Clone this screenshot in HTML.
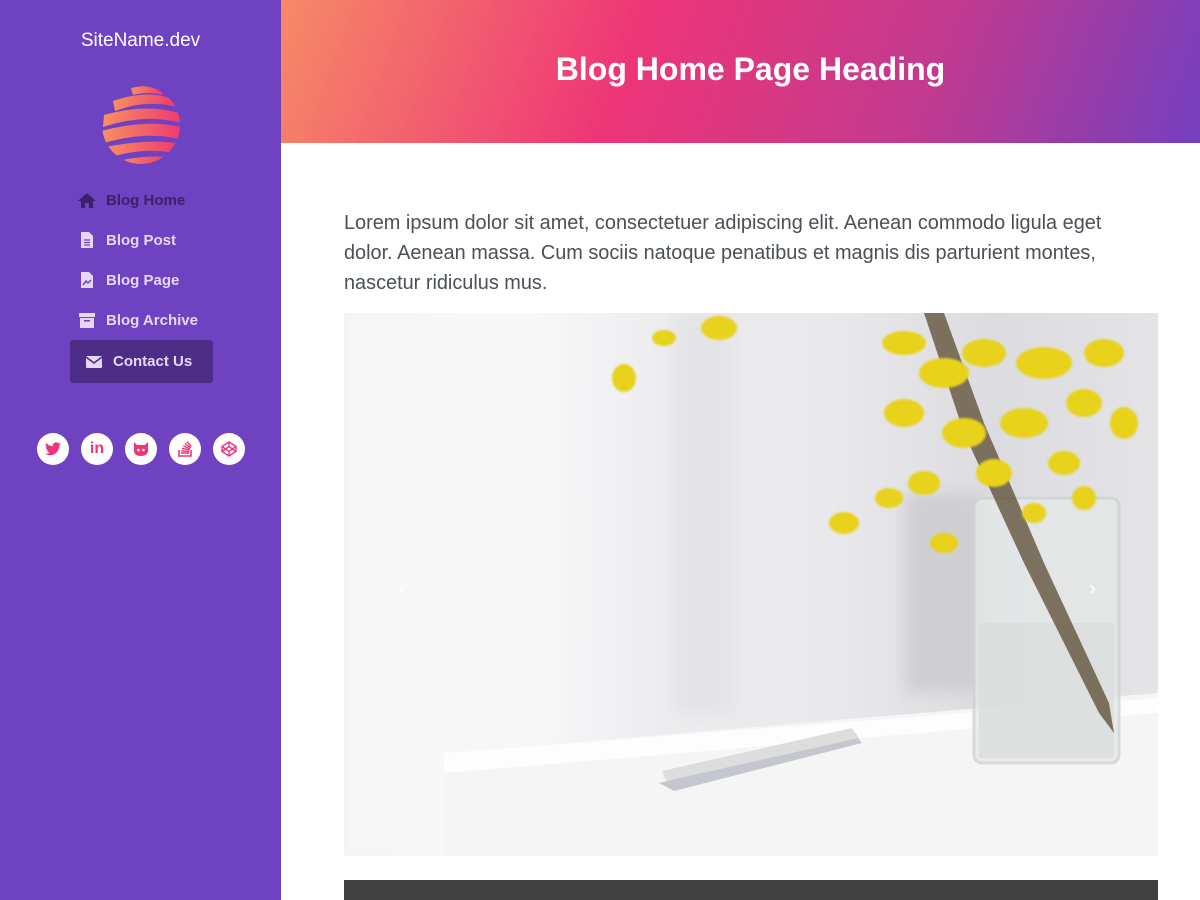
<!DOCTYPE html>
<html><head><meta charset="utf-8"><style>
*{margin:0;padding:0;box-sizing:border-box}
body{width:1200px;height:900px;overflow:hidden;background:#fff;font-family:"Liberation Sans",sans-serif;position:relative}
.side{position:absolute;left:0;top:0;width:281px;height:900px;background:#6f42c1}
.site{position:absolute;top:30px;width:281px;text-align:center;color:#fff;font-size:19px}
.nav{position:absolute;left:70px;width:143px;font-weight:bold;font-size:15px;color:#e6d8f5}
.nav div{height:40px;display:flex;align-items:center;padding-left:8px}
.nav .ic{width:28px;display:flex;justify-content:center;padding-right:10px}
.contact{background:#4e2d89;border-radius:3px;height:43px!important;padding-left:15px!important}
.soc{position:absolute;top:433px;width:32px;height:32px;border-radius:50%;background:#fff;display:flex;align-items:center;justify-content:center}
.hdr{position:absolute;left:281px;top:0;width:919px;height:143px;padding-left:20px;background:linear-gradient(110deg,#f68a66 0%,#ee3577 38%,#c13a8f 70%,#743fbf 100%)}
.hdr h1{text-align:center;color:#fff;font-size:32px;margin-top:51px}
p.t{position:absolute;left:344px;top:208px;width:800px;font-size:19.9px;line-height:30px;color:#495057}
.img{position:absolute;left:344px;top:313px;width:814px;height:543px;overflow:hidden;background:linear-gradient(90deg,#f2f2f4 0%,#fafafb 20%,#ececef 40%,#e9e9ec 60%,#dcdce0 80%,#e4e4e7 100%)}
.bar{position:absolute;left:344px;top:880px;width:814px;height:20px;background:#414141}
</style></head><body>
<div class="side">
<div class="site">SiteName.dev</div>
<svg style="position:absolute;left:101px;top:85px" width="80" height="80" viewBox="0 0 80 80">
<defs><linearGradient id="g" x1="0" x2="1"><stop offset="0" stop-color="#f89060"/><stop offset="1" stop-color="#ee3a70"/></linearGradient><clipPath id="c"><circle cx="40" cy="40" r="39"/></clipPath></defs>
<g clip-path="url(#c)" fill="url(#g)">
<path d="M30 3 Q50 -2 60 6 L62 10 Q45 6 32 10Z"/>
<path d="M12 16 Q45 4 72 14 L76 22 Q45 14 14 26Z"/>
<path d="M3 30 Q45 18 78 28 L80 38 Q45 28 2 42Z"/>
<path d="M0 46 Q45 34 80 42 L78 54 Q45 46 3 58Z"/>
<path d="M4 62 Q45 54 76 58 L72 68 Q45 62 10 72Z"/>
<path d="M16 76 Q45 70 66 72 L56 82 Q40 82 24 82Z"/>
</g></svg>
<div class="nav" style="top:180px">
<div style="color:#3b2266"><span class="ic"><svg width="18" height="15" viewBox="0 0 18 15"><path d="M9 0 L18 8 H15 V15 H11 V10 H7 V15 H3 V8 H0Z" fill="#3b2266"/></svg></span>Blog Home</div>
<div><span class="ic"><svg width="12" height="16" viewBox="0 0 12 16"><path d="M0 0H8L12 4V16H0Z" fill="#e6d8f5"/><path d="M3 8H9M3 10.5H9M3 13H9" stroke="#6f42c1" stroke-width="1.3"/></svg></span>Blog Post</div>
<div><span class="ic"><svg width="12" height="16" viewBox="0 0 12 16"><path d="M0 0H8L12 4V16H0Z" fill="#e6d8f5"/><path d="M2 13L5 9L7 11L10 8" stroke="#6f42c1" stroke-width="1.5" fill="none"/></svg></span>Blog Page</div>
<div><span class="ic"><svg width="16" height="15" viewBox="0 0 16 15"><rect width="16" height="4" fill="#e6d8f5"/><rect x="1" y="5" width="14" height="10" fill="#e6d8f5"/><rect x="5" y="7" width="6" height="1.6" fill="#6f42c1"/></svg></span>Blog Archive</div>
<div class="contact"><span class="ic" style="width:18px;padding-right:0;margin-right:10px"><svg width="16" height="12" viewBox="0 0 16 12"><rect width="16" height="12" rx="1" fill="#e6d8f5"/><path d="M0 1L8 7L16 1" stroke="#4e2d89" stroke-width="1.5" fill="none"/></svg></span>Contact Us</div>
</div>
<div class="soc" style="left:37px"><svg width="16" height="14" viewBox="0 0 24 20"><path d="M24 2.4a10 10 0 0 1-2.8.8A5 5 0 0 0 23.3.4a10 10 0 0 1-3.1 1.2A4.9 4.9 0 0 0 11.8 6 14 14 0 0 1 1.7.9a4.9 4.9 0 0 0 1.5 6.6A4.9 4.9 0 0 1 1 6.9a4.9 4.9 0 0 0 3.9 4.8 4.9 4.9 0 0 1-2.2.1 4.9 4.9 0 0 0 4.6 3.4A10 10 0 0 1 0 17.2 14 14 0 0 0 7.5 19.4c9 0 14-7.5 14-14v-.6A10 10 0 0 0 24 2.4z" fill="#ee3577"/></svg></div>
<div class="soc" style="left:81px;color:#ee3577;font-weight:bold;font-size:16px">in</div>
<div class="soc" style="left:125px"><svg width="16" height="14" viewBox="0 0 16 14"><path d="M1 0L4 3H12L15 0V6Q16 14 8 14Q0 14 1 6Z" fill="#ee3577"/><circle cx="5.5" cy="8" r="1.3" fill="#fff"/><circle cx="10.5" cy="8" r="1.3" fill="#fff"/></svg></div>
<div class="soc" style="left:169px"><svg width="14" height="16" viewBox="0 0 14 16"><path d="M1 9V15H13V9" stroke="#ee3577" stroke-width="1.6" fill="none"/><path d="M3 12H11M3.3 9.8L11 10.6M4 7.3L11.3 9M5.3 4.8L12 8M7 2.6L12.6 6.8M9 .6L13.3 5.6" stroke="#ee3577" stroke-width="1.4"/></svg></div>
<div class="soc" style="left:213px"><svg width="16" height="16" viewBox="0 0 16 16" fill="none" stroke="#ee3577" stroke-width="1.4"><path d="M8 1L15 5.5V10.5L8 15L1 10.5V5.5Z"/><path d="M8 1V5.5M8 15V10.5M1 5.5L8 10.5L15 5.5M1 10.5L8 5.5L15 10.5"/></svg></div>
</div>
<div class="hdr"><h1>Blog Home Page Heading</h1></div>
<p class="t">Lorem ipsum dolor sit amet, consectetuer adipiscing elit. Aenean commodo ligula eget dolor. Aenean massa. Cum sociis natoque penatibus et magnis dis parturient montes, nascetur ridiculus mus.</p>
<div class="img">
<svg width="814" height="543" viewBox="0 0 814 543" style="position:absolute;left:0;top:0">
<defs><filter id="b"><feGaussianBlur stdDeviation="8"/></filter><filter id="b2"><feGaussianBlur stdDeviation="1"/></filter></defs>
<rect x="0" y="0" width="200" height="543" fill="#f7f7f8" filter="url(#b)"/>
<rect x="330" y="0" width="60" height="400" fill="#e4e4e7" filter="url(#b)"/>
<rect x="560" y="180" width="80" height="200" fill="#cfcfd3" filter="url(#b)"/>
<path d="M100 440 L814 380 L814 543 L100 543Z" fill="#f5f5f6"/>
<path d="M100 440 L814 385 L814 400 L100 460Z" fill="#fdfdfd"/>
<rect x="630" y="185" width="145" height="265" rx="8" fill="#e4e8e6" stroke="#cfd3d1" stroke-width="3" opacity=".8"/>
<rect x="635" y="310" width="135" height="135" fill="#d8dcda" opacity=".7"/>
<path d="M580 0 L620 120 L680 250 L755 400 L770 420 L765 390 L700 250 L640 110 L600 0Z" fill="#5a4a30" opacity=".75"/>
<path d="M315 470 L510 420 L518 430 L330 478Z" fill="#c4c7cf"/>
<path d="M318 458 L508 415 L515 425 L322 468Z" fill="#ddd"/>
<g fill="#e8d21a" filter="url(#b2)">
<ellipse cx="560" cy="30" rx="22" ry="12"/><ellipse cx="600" cy="60" rx="25" ry="15"/><ellipse cx="640" cy="40" rx="22" ry="14"/>
<ellipse cx="700" cy="50" rx="28" ry="16"/><ellipse cx="760" cy="40" rx="20" ry="14"/><ellipse cx="560" cy="100" rx="20" ry="14"/>
<ellipse cx="620" cy="120" rx="22" ry="15"/><ellipse cx="680" cy="110" rx="24" ry="15"/><ellipse cx="740" cy="90" rx="18" ry="14"/>
<ellipse cx="580" cy="170" rx="16" ry="12"/><ellipse cx="650" cy="160" rx="18" ry="14"/><ellipse cx="720" cy="150" rx="16" ry="12"/>
<ellipse cx="500" cy="210" rx="15" ry="11"/><ellipse cx="545" cy="185" rx="14" ry="10"/><ellipse cx="600" cy="230" rx="14" ry="10"/>
<ellipse cx="375" cy="15" rx="18" ry="12"/><ellipse cx="280" cy="65" rx="12" ry="14"/><ellipse cx="320" cy="25" rx="12" ry="8"/>
<ellipse cx="780" cy="110" rx="14" ry="16"/><ellipse cx="740" cy="185" rx="12" ry="12"/><ellipse cx="690" cy="200" rx="12" ry="10"/>
</g>
<text x="55" y="282" fill="#fff" font-size="22" font-family="Liberation Sans">‹</text>
<text x="745" y="282" fill="#fff" font-size="22" font-family="Liberation Sans">›</text>
</svg>
</div>
<div class="bar"></div>
</body></html>
